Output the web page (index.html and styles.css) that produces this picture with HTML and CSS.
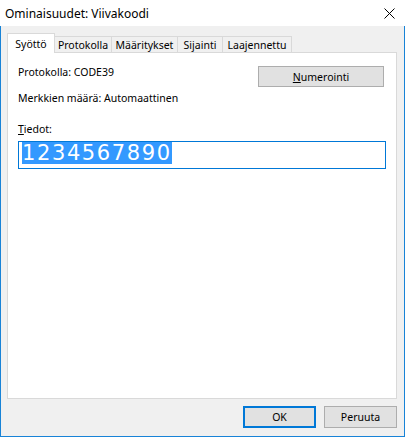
FILE: index.html
```html
<!DOCTYPE html>
<html lang="fi">
<head>
<meta charset="utf-8">
<title>Ominaisuudet: Viivakoodi</title>
<link rel="stylesheet" href="styles.css">
</head>
<body>
<div class="window">
  <div class="titlebar">
    <span class="title">Ominaisuudet: Viivakoodi</span>
    <svg class="close" width="11" height="11" viewBox="0 0 11 11"><path d="M0.5 0.5 L10.5 10.5 M10.5 0.5 L0.5 10.5" stroke="#000" stroke-width="1" fill="none"/></svg>
  </div>
  <div class="body">
    <div class="tabs">
      <div class="tab active t1">Syöttö</div>
      <div class="tab t2">Protokolla</div>
      <div class="tab t3">Määritykset</div>
      <div class="tab t4">Sijainti</div>
      <div class="tab t5">Laajennettu</div>
    </div>
    <div class="panel">
      <div class="row1">
        <span class="label">Protokolla: CODE39</span>
        <button class="btn numbtn"><u>N</u>umerointi</button>
      </div>
      <div class="label row2">Merkkien määrä: Automaattinen</div>
      <div class="label row3"><u>T</u>iedot:</div>
      <div class="input"><span class="sel">1234567890</span></div>
    </div>
    <div class="footer">
      <button class="btn ok">OK</button>
      <button class="btn cancel">Peruuta</button>
    </div>
  </div>
</div>
</body>
</html>
```
FILE: styles.css
```css
html, body {
  margin: 0;
  padding: 0;
  background: #fff;
}
body {
  font-family: "Noto Sans", "Open Sans", sans-serif;
  font-size: 10.5px;
  line-height: 16px;
  color: #000;
}
.window {
  width: 405px;
  height: 437px;
  display: flex;
  flex-direction: column;
}
.titlebar {
  height: 26px;
  flex: none;
  background: #fff;
  display: flex;
  align-items: center;
  justify-content: space-between;
  padding: 0 10px 0 5px;
  font-size: 12px;
}
.title {
  position: relative;
  top: 1px;
}
.close {
  display: block;
  margin-top: 1px;
}
.body {
  flex: 1;
  background: #f0f0f0;
  border: 1px solid #1883d7;
  border-top: none;
  padding: 7px 7px 0 6px;
  display: flex;
  flex-direction: column;
}
.tabs {
  display: flex;
  align-items: flex-end;
  height: 19px;
  position: relative;
  z-index: 1;
}
.tab {
  box-sizing: border-box;
  height: 16px;
  border-top: 1px solid #d9d9d9;
  border-right: 1px solid #d9d9d9;
  background: #f0f0f0;
  display: flex;
  justify-content: center;
  align-items: center;
  padding-top: 1px;
}
.tab.active {
  height: 20px;
  margin-bottom: -1px;
  background: #fff;
  border-left: 1px solid #d9d9d9;
  align-items: flex-start;
  padding-top: 2px;
}
.t1 { width: 48px; }
.t2 { width: 57px; }
.t3 { width: 66px; }
.t4 { width: 45px; }
.t5 { width: 69px; }
.panel {
  box-sizing: border-box;
  height: 347px;
  background: #fff;
  border: 1px solid #d9d9d9;
  padding: 11px 10px 0 10px;
  flex: none;
}
.row1 {
  display: flex;
  justify-content: space-between;
  align-items: flex-start;
}
.btn {
  box-sizing: border-box;
  font-family: inherit;
  font-size: 10.5px;
  line-height: 16px;
  color: #000;
  background: #e1e1e1;
  border: 1px solid #adadad;
  border-radius: 0;
  padding: 0;
  margin: 0;
  display: flex;
  align-items: center;
  justify-content: center;
}
.numbtn {
  width: 126px;
  height: 21px;
  margin-top: 2px;
  margin-right: 2px;
}
.row2 {
  margin-top: 3px;
}
.row3 {
  margin-top: 15px;
}
.input {
  box-sizing: border-box;
  margin-top: 4px;
  width: 368px;
  height: 28px;
  border: 1px solid #0078d7;
  padding: 0 0 0 3px;
}
.sel {
  display: inline-block;
  font-family: "DejaVu Sans", sans-serif;
  font-size: 21px;
  line-height: 22px;
  letter-spacing: 1.6px;
  background: #3399ff;
  color: #fff;
}
.footer {
  display: flex;
  justify-content: flex-end;
  gap: 8px;
  margin-top: 7px;
}
.ok, .cancel {
  width: 73px;
  height: 22px;
}
.ok {
  border: 2px solid #0078d7;
}
```
